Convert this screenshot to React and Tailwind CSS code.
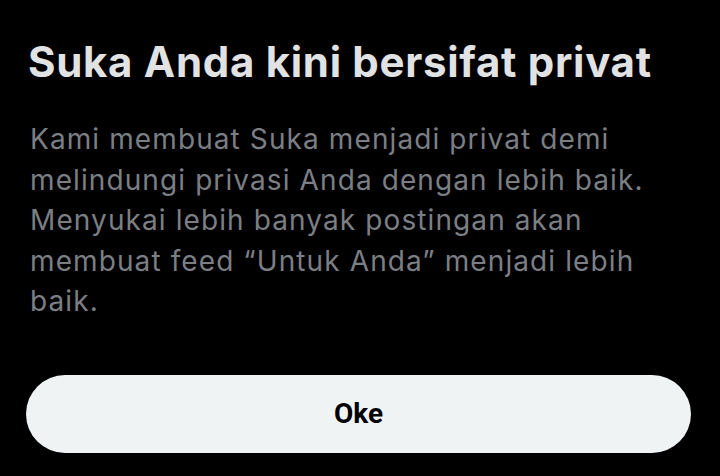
import React from 'react';

const App = () => {
    return (
        <div className="w-[720px] h-[476px] bg-black overflow-hidden" style={{ fontFamily: 'Inter, "Noto Sans", sans-serif' }}>
            <div className="pl-[28px] pr-[20px] pt-[38px]">
                <h1 className="text-[42px] leading-[48px] font-bold text-[#e1e2e3] tracking-[0.7px] whitespace-nowrap">Suka Anda kini bersifat privat</h1>
                <p className="mt-[33px] w-[640px] pl-[2px] text-[28px] leading-[40.5px] text-[#7b7f84] tracking-[1.1px]">
                    Kami membuat Suka menjadi privat demi melindungi privasi Anda dengan lebih baik. Menyukai lebih banyak postingan akan membuat feed “Untuk Anda” menjadi lebih baik.
                </p>
            </div>
            <div className="pl-[26px] pr-[29px] mt-[53px]">
                <button className="w-full h-[78px] rounded-full bg-[#eff3f4] text-black text-[28px] font-bold flex items-center justify-center" style={{ fontFamily: 'Roboto, sans-serif' }}>
                    Oke
                </button>
            </div>
        </div>
    );
};

export default App;
